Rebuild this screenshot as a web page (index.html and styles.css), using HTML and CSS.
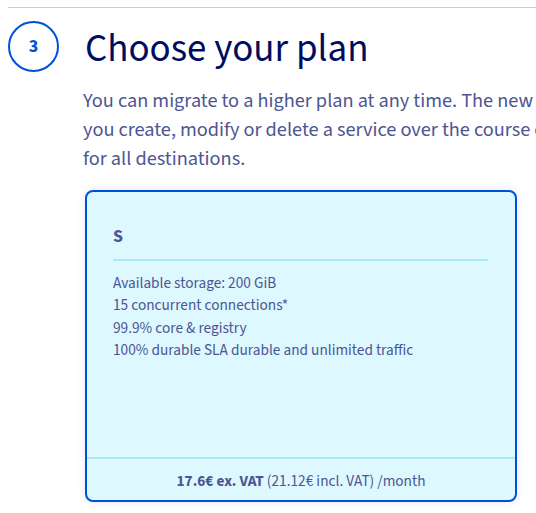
FILE: index.html
```html
<!DOCTYPE html>
<html lang="en">
<head>
    <meta charset="UTF-8">
    <meta name="viewport" content="width=device-width, initial-scale=1.0">
    <title>Choose your plan</title>
    <link rel="stylesheet" href="styles.css">
</head>
<body>
    <section class="step">
        <div class="step-header">
            <span class="step-number">3</span>
            <h2 class="step-title">Choose your plan</h2>
        </div>
        <div class="step-body">
            <p class="step-text">You can migrate to a higher plan at any time. The new billing will apply from the day<br>
                you create, modify or delete a service over the course of the month, and applies<br>
                for all destinations.</p>

            <div class="plan-card">
                <div class="plan-main">
                    <h3 class="plan-name">S</h3>
                    <ul class="plan-features">
                        <li>Available storage: 200 GiB</li>
                        <li>15 concurrent connections*</li>
                        <li>99.9% core &amp; registry</li>
                        <li>100% durable SLA durable and unlimited traffic</li>
                    </ul>
                </div>
                <div class="plan-price">
                    <strong>17.6€ ex. VAT</strong> (21.12€ incl. VAT) /month
                </div>
            </div>
        </div>
    </section>
</body>
</html>
```

FILE: styles.css
```css
* {
    margin: 0;
    padding: 0;
    box-sizing: border-box;
}

html, body {
    width: 100%;
    height: 100%;
    overflow: hidden;
}

body {
    background: #fff;
    font-family: "Source Sans Pro", "Source Sans 3", Lato, "Liberation Sans", sans-serif;
    color: #4d5592;
    padding: 7px 0 0 8px;
}

.step {
    width: 900px;
    border-top: 1px solid #cccccc;
}

.step-header {
    display: flex;
    align-items: center;
    gap: 26px;
    padding-top: 13px;
}

.step-number {
    width: 51px;
    height: 51px;
    border: 2px solid #0050d7;
    border-radius: 50%;
    display: flex;
    align-items: center;
    justify-content: center;
    color: #0050d7;
    font-weight: 700;
    font-size: 18px;
    flex-shrink: 0;
}

.step-title {
    font-size: 39px;
    font-weight: 400;
    color: #000d5e;
    line-height: 41px;
    padding-top: 6px;
}

.step-body {
    padding-left: 75px;
}

.step-text {
    font-size: 20.3px;
    line-height: 29px;
    margin-top: 14px;
    white-space: nowrap;
}

.plan-card {
    margin-top: 17px;
    margin-left: 2px;
    width: 432px;
    height: 312px;
    background: #def8ff;
    border: 2px solid #0050d7;
    border-radius: 8px;
    box-shadow: 0 0 8px rgba(0, 14, 156, 0.1);
    display: flex;
    flex-direction: column;
}

.plan-main {
    flex: 1;
    padding: 33px 27px 0 26px;
}

.plan-name {
    font-size: 18px;
    font-weight: 700;
    color: #4d5592;
    line-height: 24px;
    padding-bottom: 10px;
    border-bottom: 2px solid #aae7fb;
}

.plan-features {
    list-style: none;
    font-size: 15.3px;
    line-height: 22.4px;
    margin-top: 11px;
}

.plan-price {
    border-top: 2px solid #aae7fb;
    text-align: center;
    font-size: 15.3px;
    line-height: 20px;
    padding: 12px 0 9px;
}

.plan-price strong {
    font-weight: 700;
}
```
